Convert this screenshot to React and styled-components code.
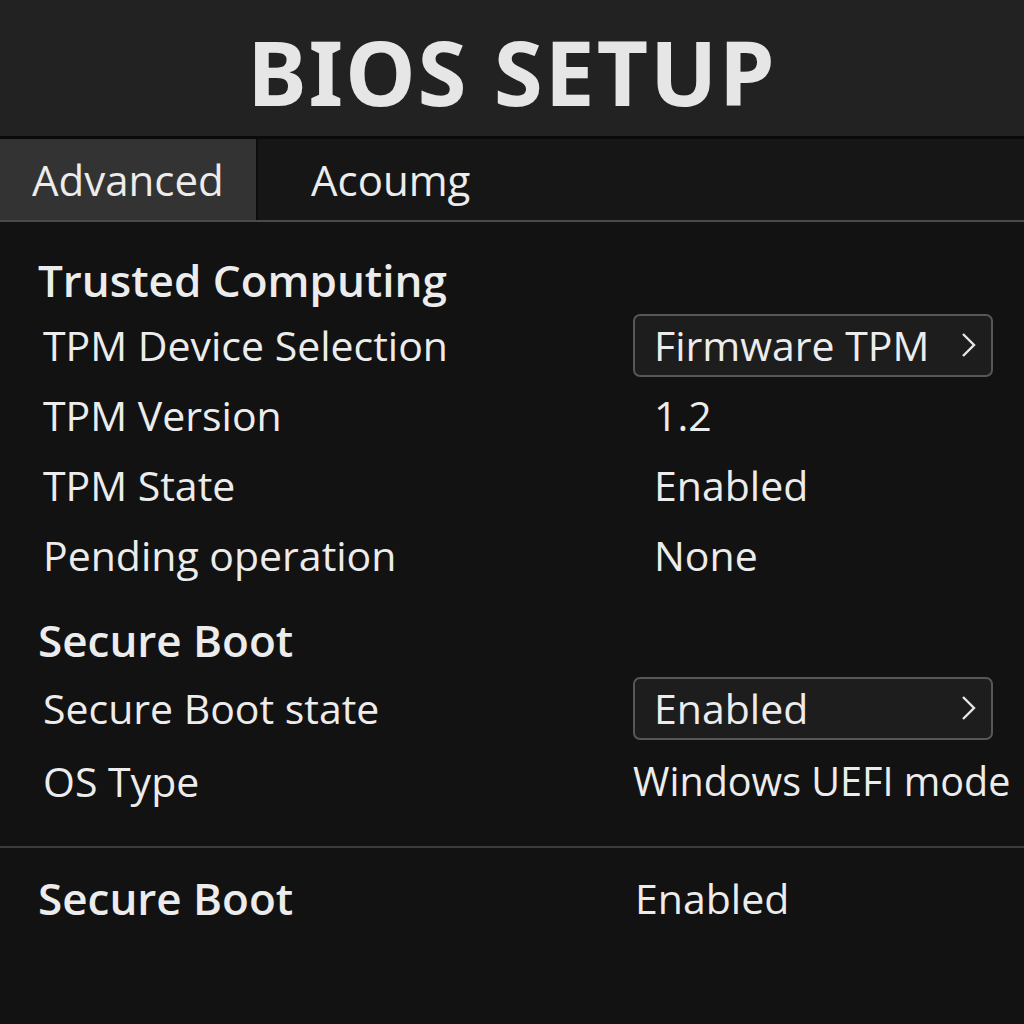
import styled, { createGlobalStyle } from "styled-components";

const Global = createGlobalStyle`
  html, body {
    margin: 0;
    padding: 0;
    background: #121212;
  }
  body {
    font-family: "Open Sans", "DejaVu Sans", sans-serif;
    color: #ececec;
  }
`;

const Screen = styled.div`
  width: 1024px;
  height: 1024px;
  background: #121212;
  display: flex;
  flex-direction: column;
  overflow: hidden;
`;

const Header = styled.div`
  height: 139px;
  background: #222222;
  display: flex;
  justify-content: center;
  align-items: center;
  border-bottom: 3px solid #0a0a0a;
  box-sizing: border-box;
`;

const Title = styled.h1`
  margin: 0;
  font-family: "Noto Sans", sans-serif;
  font-weight: bold;
  font-size: 89px;
  letter-spacing: 2px;
  color: #e6e6e6;
  padding-top: 6px;
`;

const TabBar = styled.div`
  height: 83px;
  background: #161616;
  display: flex;
  border-bottom: 2px solid #4a4a4a;
  box-sizing: border-box;
`;

const Tab = styled.div`
  width: ${(p) => p.$w}px;
  display: flex;
  align-items: center;
  padding-left: ${(p) => p.$pad}px;
  box-sizing: border-box;
  font-size: 42px;
  color: #ececec;
  background: ${(p) => (p.$active ? "#333333" : "transparent")};
  border-right: ${(p) => (p.$active ? "2px solid #0c0c0c" : "none")};
`;

const Content = styled.div`
  padding: 28px 0 0 0;
  display: flex;
  flex-direction: column;
`;

const Section = styled.div`
  padding: 0 14px 0 38px;
  display: flex;
  flex-direction: column;
`;

const Heading = styled.div`
  font-weight: 600;
  font-size: 44px;
  height: 60px;
  line-height: 60px;
  white-space: nowrap;
  margin-top: ${(p) => p.$top || 0}px;
`;

const Row = styled.div`
  display: grid;
  grid-template-columns: 595px 1fr;
  align-items: center;
  height: ${(p) => p.$h || 70}px;
`;

const Label = styled.div`
  font-size: 41px;
  padding-left: 5px;
  white-space: nowrap;
`;

const Value = styled.div`
  font-size: ${(p) => p.$size || 41}px;
  white-space: nowrap;
  padding-left: ${(p) => p.$pad ?? 21}px;
`;

const Select = styled.div`
  height: 63px;
  width: 360px;
  box-sizing: border-box;
  border: 2px solid #575757;
  border-radius: 7px;
  background: #1d1d1d;
  display: flex;
  align-items: center;
  justify-content: space-between;
  padding: 0 14px 0 19px;
  font-size: 41px;
`;

const Divider = styled.div`
  height: 2px;
  background: #3c3c3c;
  margin-top: 30px;
`;

const Chevron = () => (
  <svg width="18" height="26" viewBox="0 0 18 26">
    <path d="M4 2 L15 13 L4 24" fill="none" stroke="#e6e6e6" strokeWidth="2.4" />
  </svg>
);

export default function App() {
  return (
    <Screen>
      <Global />
      <Header>
        <Title>BIOS SETUP</Title>
      </Header>
      <TabBar>
        <Tab $active $w={258} $pad={32}>Advanced</Tab>
        <Tab $w={300} $pad={53}>Acoumg</Tab>
      </TabBar>
      <Content>
        <Section>
          <Heading>Trusted Computing</Heading>
          <Row>
            <Label>TPM Device Selection</Label>
            <Select>
              Firmware TPM <Chevron />
            </Select>
          </Row>
          <Row>
            <Label>TPM Version</Label>
            <Value>1.2</Value>
          </Row>
          <Row>
            <Label>TPM State</Label>
            <Value>Enabled</Value>
          </Row>
          <Row>
            <Label>Pending operation</Label>
            <Value>None</Value>
          </Row>
          <Heading $top={20}>Secure Boot</Heading>
          <Row $h={76}>
            <Label>Secure Boot state</Label>
            <Select>
              Enabled <Chevron />
            </Select>
          </Row>
          <Row>
            <Label>OS Type</Label>
            <Value $pad={0} $size={39.5}>Windows UEFI mode</Value>
          </Row>
        </Section>
        <Divider />
        <Section>
          <Row $h={100}>
            <Heading>Secure Boot</Heading>
            <Value $pad={2}>Enabled</Value>
          </Row>
        </Section>
      </Content>
    </Screen>
  );
}
